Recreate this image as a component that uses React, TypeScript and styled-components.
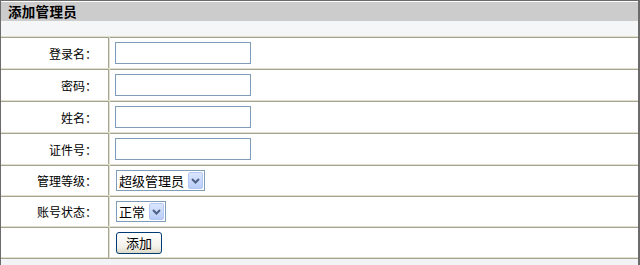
import { FC } from "react";
import styled, { createGlobalStyle } from "styled-components";

const GlobalStyle = createGlobalStyle`
	html, body {
		margin: 0;
		padding: 0;
		background: #ffffff;
	}
	body {
		font-family: "Noto Sans CJK SC", "Noto Sans", sans-serif;
		font-size: 12px;
		color: #000000;
	}
`;

interface IField {
	label: string;
}

const textFields: IField[] = [
	{ label: "登录名：" },
	{ label: "密码：" },
	{ label: "姓名：" },
	{ label: "证件号：" },
];

const ArrowIcon: FC = () => (
	<svg width="9" height="6" viewBox="0 0 9 6">
		<path d="M1 1 L4.5 4.5 L8 1" fill="none" stroke="#4d6185" strokeWidth="2" />
	</svg>
);

const App: FC = () => {
	return (
		<>
			<GlobalStyle />
			<Panel>
				<TitleBar>添加管理员</TitleBar>
				<SubBar />
				<FormTable>
					{textFields.map((field) => (
						<Row key={field.label} $height={32}>
							<LabelCell>{field.label}</LabelCell>
							<ValueCell>
								<TextInput type="text" />
							</ValueCell>
						</Row>
					))}

					<Row $height={31}>
						<LabelCell>管理等级：</LabelCell>
						<ValueCell>
							<SelectWrap>
								<Select $width={89} defaultValue="super">
									<option value="super">超级管理员</option>
									<option value="normal">普通管理员</option>
								</Select>
								<SelectArrow>
									<ArrowIcon />
								</SelectArrow>
							</SelectWrap>
						</ValueCell>
					</Row>

					<Row $height={31}>
						<LabelCell>账号状态：</LabelCell>
						<ValueCell>
							<SelectWrap>
								<Select $width={50} defaultValue="ok">
									<option value="ok">正常</option>
									<option value="locked">锁定</option>
								</Select>
								<SelectArrow>
									<ArrowIcon />
								</SelectArrow>
							</SelectWrap>
						</ValueCell>
					</Row>

					<Row $height={32}>
						<LabelCell />
						<ValueCell>
							<SubmitBtn type="button">添加</SubmitBtn>
						</ValueCell>
					</Row>
				</FormTable>
				<FooterBar />
			</Panel>
		</>
	);
};

export default App;

const Panel = styled.div`
	width: 640px;
	height: 265px;
	box-sizing: border-box;
	border-top: 1px solid #6b6b6b;
	border-left: 1px solid #6b6b6b;
	border-right: 2px solid #6b6b6b;
	display: flex;
	flex-direction: column;
	overflow: hidden;
`;

const TitleBar = styled.div`
	height: 19px;
	border-top: 1px solid #ffffff;
	background-color: #cccccc;
	padding: 0 0 0 7px;
	font-weight: bold;
	font-size: 13.5px;
	line-height: 19px;
	letter-spacing: 0.3px;
`;

const SubBar = styled.div`
	height: 15px;
	background-color: #f5f6f8;
`;

const FormTable = styled.div`
	display: flex;
	flex-direction: column;
	border-bottom: 1px solid #a5a391;
	box-shadow: inset 0 -1px 0 #e2dfcd;
`;

const Row = styled.div<{ $height: number }>`
	height: ${({ $height }) => $height}px;
	box-sizing: border-box;
	display: grid;
	grid-template-columns: 108px 1fr;
	border-top: 1px solid #e2dfcd;
	box-shadow: inset 0 1px 0 #a5a391;
`;

const LabelCell = styled.div`
	display: flex;
	align-items: center;
	justify-content: flex-end;
	padding: 1px 11px 0 0;
	border-right: 1px solid #a5a391;
	font-size: 12px;
`;

const ValueCell = styled.div`
	display: flex;
	align-items: center;
	padding: 1px 0 0 5px;
	border-left: 1px solid #e2dfcd;
`;

const TextInput = styled.input`
	width: 136px;
	height: 22px;
	box-sizing: border-box;
	margin: 0;
	padding: 0 2px;
	border: 1px solid #7f9db9;
	background: #ffffff;
	font-family: "Noto Sans CJK SC", sans-serif;
	font-size: 12px;
	outline: none;
`;

const SelectWrap = styled.div`
	position: relative;
	display: inline-flex;
	margin-left: 1px;
`;

const Select = styled.select<{ $width: number }>`
	width: ${({ $width }) => $width}px;
	height: 21px;
	box-sizing: border-box;
	margin: 0;
	padding: 0 16px 0 2px;
	border: 1px solid #7f9db9;
	border-radius: 0;
	background: #ffffff;
	appearance: none;
	-webkit-appearance: none;
	font-family: "Noto Sans CJK SC", sans-serif;
	font-size: 13px;
	line-height: 19px;
	color: #000000;
	outline: none;
`;

const SelectArrow = styled.span`
	position: absolute;
	top: 2px;
	right: 2px;
	width: 15px;
	height: 17px;
	box-sizing: border-box;
	display: flex;
	align-items: center;
	justify-content: center;
	border: 1px solid #b4c8f6;
	border-radius: 2px;
	background: linear-gradient(#dbe6fd, #b9cdf8);
	pointer-events: none;
`;

const SubmitBtn = styled.button`
	width: 46px;
	height: 22px;
	margin: 0 0 0 1px;
	padding: 0;
	box-sizing: border-box;
	border: 1px solid #003c74;
	border-radius: 3px;
	background: linear-gradient(#ffffff, #f2f1ea 70%, #dcd8c6);
	font-family: "Noto Sans CJK SC", sans-serif;
	font-size: 13px;
	line-height: 20px;
	color: #000000;
	cursor: pointer;
`;

const FooterBar = styled.div`
	flex: 1;
	background-color: #f2f3f6;
`;
